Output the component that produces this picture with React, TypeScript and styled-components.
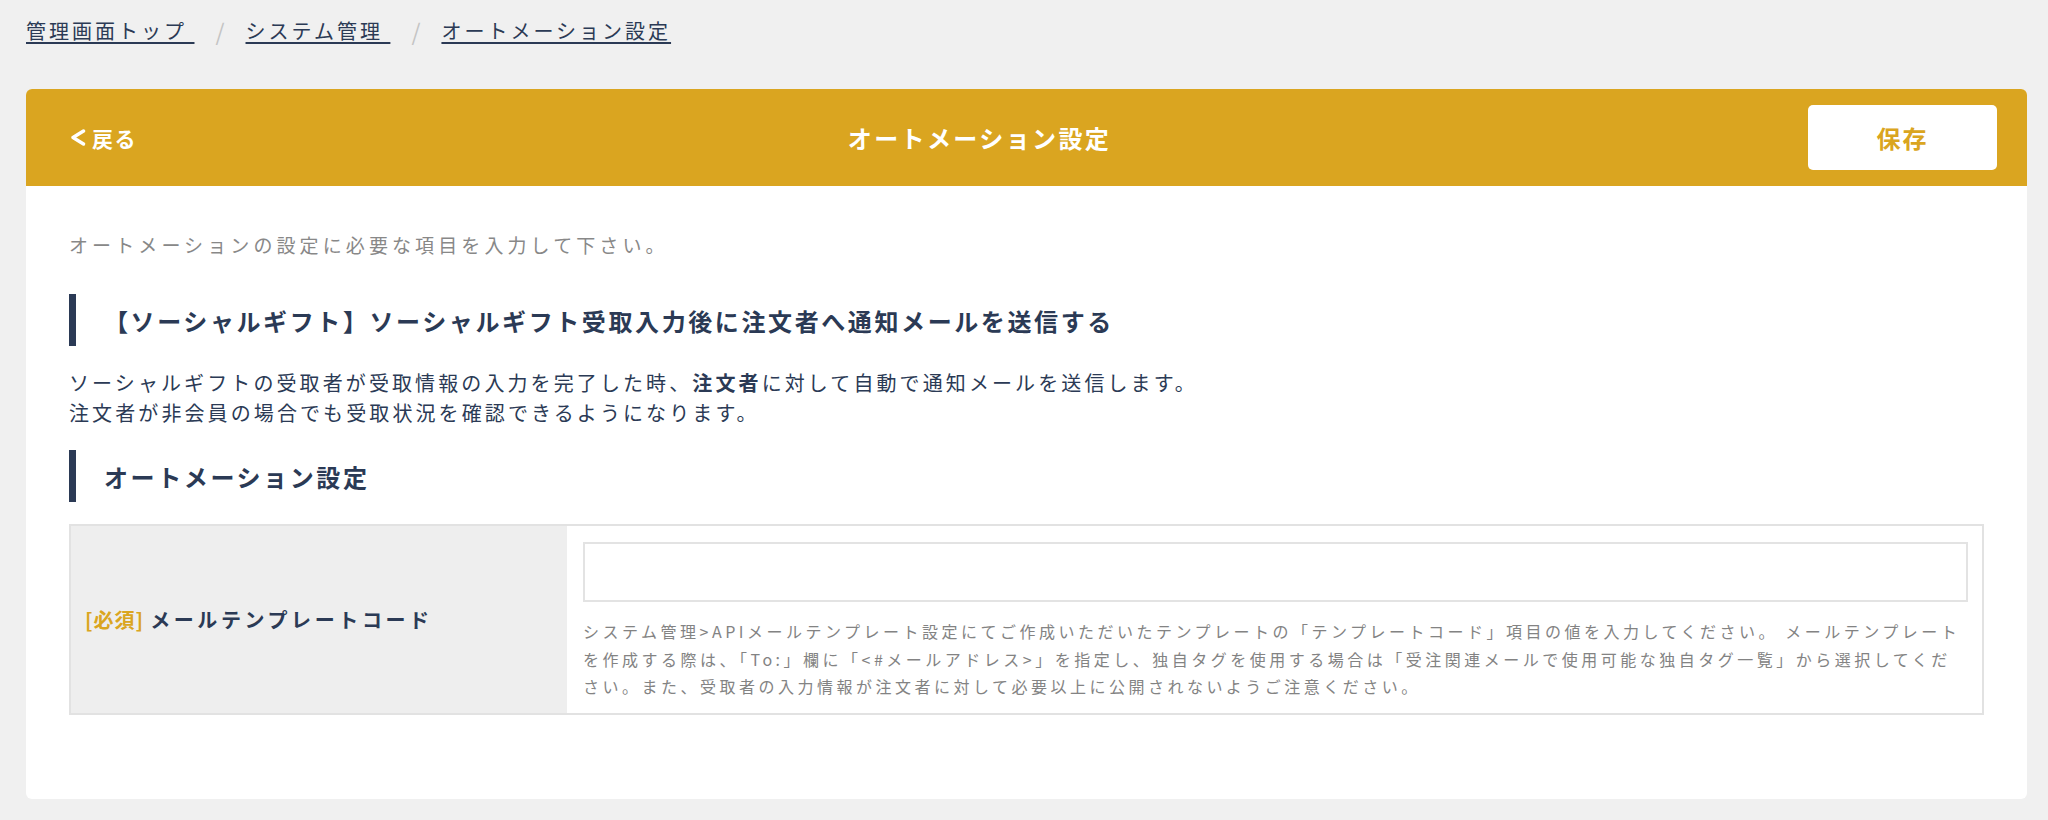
import React from "react";
import styled, { createGlobalStyle } from "styled-components";

const NAVY = "#2b3a55";
const GOLD = "#daa520";

const GlobalStyle = createGlobalStyle`
  html, body {
    margin: 0;
    padding: 0;
    background: #f0f0f0;
  }
  body {
    font-family: "Noto Sans CJK JP", "Noto Sans", sans-serif;
    color: ${NAVY};
  }
  * { box-sizing: border-box; }
`;

const Page = styled.div`
  padding: 16px 21px 22px 26px;
`;

const Breadcrumb = styled.nav`
  display: flex;
  align-items: center;
  gap: 17px;
  height: 30px;
  font-size: 20px;
  line-height: 30px;
`;

const Crumb = styled.a`
  color: ${NAVY};
  letter-spacing: 3px;
  white-space: pre;
  text-decoration: underline;
  text-decoration-thickness: 2px;
  text-underline-offset: 3px;
  cursor: pointer;
`;

const Separator = styled.span`
  color: #c4c4c4;
  font-size: 23px;
  padding: 0 4px;
`;

const Card = styled.section`
  margin-top: 43px;
  background: #ffffff;
  border-radius: 6px;
  overflow: hidden;
`;

const Header = styled.header`
  display: flex;
  align-items: center;
  height: 97px;
  padding: 0 30px 0 44px;
  background: ${GOLD};
`;

const BackLink = styled.a`
  display: flex;
  align-items: center;
  gap: 6px;
  color: #ffffff;
  font-size: 21px;
  font-weight: 700;
  letter-spacing: 1.5px;
  cursor: pointer;

  svg { display: block; }
`;

const Title = styled.h1`
  flex: 1;
  margin: 0;
  padding-left: 14px;
  text-align: center;
  color: #ffffff;
  font-size: 24px;
  font-weight: 700;
  letter-spacing: 2.4px;
`;

const SaveButton = styled.button`
  width: 189px;
  height: 65px;
  border: none;
  border-radius: 5px;
  background: #ffffff;
  color: ${GOLD};
  font-family: inherit;
  font-size: 24px;
  font-weight: 700;
  letter-spacing: 2px;
  cursor: pointer;
`;

const Body = styled.div`
  display: flex;
  flex-direction: column;
  padding: 44px 43px 84px;
`;

const Intro = styled.p`
  margin: 0 0 34px;
  color: #888888;
  font-size: 19px;
  line-height: 30px;
  letter-spacing: 4.1px;
`;

const SectionHeading = styled.h2`
  display: flex;
  align-items: center;
  height: 52px;
  margin: 0;
  padding-left: 28px;
  border-left: 7px solid ${NAVY};
  color: ${NAVY};
  font-size: 24px;
  font-weight: 700;
  letter-spacing: 2.6px;
`;

const Paragraph = styled.p`
  margin: 22px 0;
  color: ${NAVY};
  font-size: 20px;
  line-height: 30px;
  letter-spacing: 3.1px;

  strong { font-weight: 700; }
`;

const FormTable = styled.div`
  display: grid;
  grid-template-columns: 496px 1fr;
  margin-top: 22px;
  border: 2px solid #e2e2e2;
`;

const LabelCell = styled.div`
  display: flex;
  align-items: center;
  padding: 0 14px;
  background: #eeeeee;
  color: ${NAVY};
  font-size: 20px;
  font-weight: 700;
  letter-spacing: 3.6px;
`;

const Required = styled.span`
  color: ${GOLD};
  margin-right: 6px;
  letter-spacing: 1px;
`;

const FieldCell = styled.div`
  display: flex;
  flex-direction: column;
  padding: 16px 14px 12px 16px;
  background: #ffffff;
`;

const TextInput = styled.input`
  width: 100%;
  height: 60px;
  border: 2px solid #e3e3e3;
  background: #ffffff;
  font-family: inherit;
  font-size: 18px;
  padding: 0 12px;
  outline: none;
`;

const Help = styled.p`
  margin: 16px 0 0;
  color: #838383;
  font-size: 16px;
  line-height: 27.5px;
  letter-spacing: 3.5px;
`;

const ChevronLeft = () => (
  <svg width="16" height="17" viewBox="0 0 16 17" aria-hidden="true">
    <polyline
      points="13.5,2 3,8.5 13.5,15"
      fill="none"
      stroke="#ffffff"
      strokeWidth="3.4"
      strokeLinecap="round"
      strokeLinejoin="round"
    />
  </svg>
);

export default function App() {
  return (
    <>
      <GlobalStyle />
      <Page>
        <Breadcrumb>
          <Crumb>{"管理画面トップ\u00a0"}</Crumb>
          <Separator>/</Separator>
          <Crumb>{"システム管理\u00a0"}</Crumb>
          <Separator>/</Separator>
          <Crumb>オートメーション設定</Crumb>
        </Breadcrumb>

        <Card>
          <Header>
            <BackLink>
              <ChevronLeft />
              戻る
            </BackLink>
            <Title>オートメーション設定</Title>
            <SaveButton type="button">保存</SaveButton>
          </Header>

          <Body>
            <Intro>オートメーションの設定に必要な項目を入力して下さい。</Intro>

            <SectionHeading>
              【ソーシャルギフト】ソーシャルギフト受取入力後に注文者へ通知メールを送信する
            </SectionHeading>

            <Paragraph>
              ソーシャルギフトの受取者が受取情報の入力を完了した時、<strong>注文者</strong>
              に対して自動で通知メールを送信します。
              <br />
              注文者が非会員の場合でも受取状況を確認できるようになります。
            </Paragraph>

            <SectionHeading>オートメーション設定</SectionHeading>

            <FormTable>
              <LabelCell>
                <Required>[必須]</Required>
                メールテンプレートコード
              </LabelCell>
              <FieldCell>
                <TextInput type="text" />
                <Help>
                  システム管理&gt;APIメールテンプレート設定にてご作成いただいたテンプレートの「テンプレートコード」項目の値を入力してください。
                  メールテンプレートを作成する際は、「To:」欄に「&lt;#メールアドレス&gt;」を指定し、独自タグを使用する場合は「受注関連メールで使用可能な独自タグ一覧」から選択してください。また、受取者の入力情報が注文者に対して必要以上に公開されないようご注意ください。
                </Help>
              </FieldCell>
            </FormTable>
          </Body>
        </Card>
      </Page>
    </>
  );
}
